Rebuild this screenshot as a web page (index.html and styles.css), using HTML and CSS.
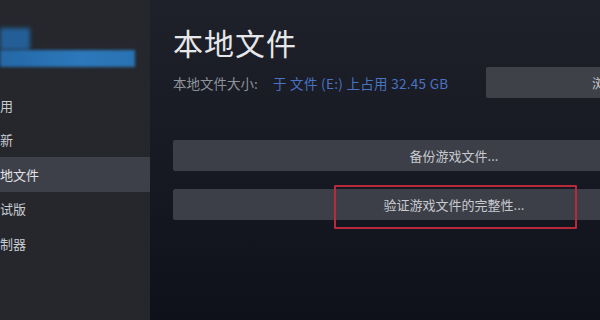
FILE: index.html
```html
<!DOCTYPE html>
<html>
<head>
<meta charset="utf-8">
<meta name="viewport" content="width=device-width, initial-scale=1">
<link rel="stylesheet" href="styles.css">
</head>
<body>

<div class="sidebar">
  <div class="account">
    <div class="account-name"></div>
    <div class="account-bar"></div>
  </div>
  <div class="nav">
    <div class="nav-item"><span class="nav-label">通用</span></div>
    <div class="nav-item"><span class="nav-label">更新</span></div>
    <div class="nav-item selected"><span class="nav-label">本地文件</span></div>
    <div class="nav-item"><span class="nav-label">测试版</span></div>
    <div class="nav-item"><span class="nav-label">控制器</span></div>
  </div>
</div>

<div class="main">
  <h1 class="title">本地文件</h1>
  <div class="info-row">
    <span class="info-label">本地文件大小:</span>
    <span class="info-value">于 文件 (E:) 上占用 32.45 GB</span>
    <div class="btn btn-browse">浏览...</div>
  </div>
  <div class="btn btn-wide">备份游戏文件...</div>
  <div class="btn btn-wide verify">
    验证游戏文件的完整性...
    <div class="highlight"></div>
  </div>
</div>

</body>
</html>
```

FILE: styles.css
```css
* {
  box-sizing: border-box;
}

body {
  margin: 0;
  width: 600px;
  height: 320px;
  overflow: hidden;
  display: flex;
  background-color: #171a22;
  font-family: "Noto Sans CJK SC", "Noto Sans", sans-serif;
}

.sidebar {
  width: 150px;
  flex-shrink: 0;
  background-color: #25272c;
  padding-top: 28px;
  overflow: hidden;
}

.account {
  height: 60px;
}

.account-name {
  width: 30px;
  height: 22px;
  background-color: #235f96;
  filter: blur(2px);
}

.account-bar {
  width: 135px;
  height: 17px;
  background: linear-gradient(to right, #2468a6, #2c78bb 60%, #2a72b2);
  filter: blur(1.5px);
}

.nav-item {
  height: 34.5px;
  display: flex;
  align-items: center;
  font-size: 13px;
  color: #c9cbd0;
}

.nav-item.selected {
  background-color: #3d4048;
  color: #e2e3e6;
}

.nav-label {
  margin-left: -13px;
}

.main {
  flex-shrink: 0;
  width: 585px;
  padding: 22px 0 0 23px;
  background: linear-gradient(to bottom, #1e2129, #161922 55%, #0e1119);
}

.title {
  margin: 0;
  font-size: 30px;
  line-height: 40px;
  font-weight: 400;
  color: #e6e7ea;
  letter-spacing: 1px;
}

.info-row {
  margin-top: 5px;
  height: 31px;
  display: flex;
  align-items: center;
  font-size: 13.5px;
}

.info-label {
  color: #8e929a;
  width: 100px;
}

.info-value {
  color: #4a73c4;
  letter-spacing: 0.3px;
}

.btn {
  background-color: #3c3f47;
  color: #c8cad0;
  font-size: 13px;
  height: 31px;
  display: flex;
  align-items: center;
  justify-content: center;
  border-radius: 2px;
}

.btn-browse {
  margin-left: auto;
  width: 249px;
  background-color: #3e4148;
}

.btn-wide {
  width: 562px;
  margin-top: 42px;
}

.verify {
  margin-top: 18px;
  position: relative;
}

/* red annotation box drawn over the button */
.highlight {
  position: absolute;
  left: 161px;
  top: -4px;
  width: 243px;
  height: 44px;
  border: 2px solid #b62a3c;
  border-radius: 1px;
}
```
